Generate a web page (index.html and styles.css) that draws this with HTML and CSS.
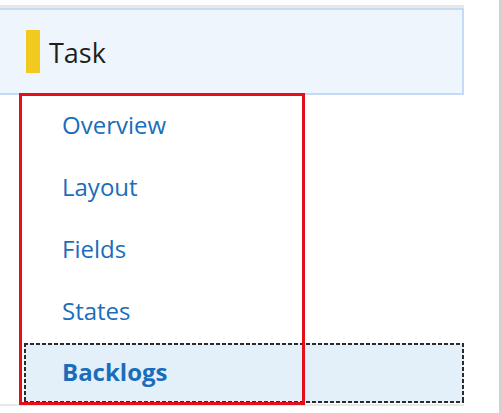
FILE: index.html
```html
<!DOCTYPE html>
<html>
<head>
<meta charset="utf-8">
<link rel="stylesheet" href="styles.css">
</head>
<body>
<div class="page">
  <div class="panel">
    <div class="topline"></div>
    <div class="header">
      <span class="bar"></span>
      <span class="title">Task</span>
    </div>
    <ul class="nav">
      <li class="item"><a>Overview</a></li>
      <li class="item"><a>Layout</a></li>
      <li class="item"><a>Fields</a></li>
      <li class="item"><a>States</a></li>
      <li class="item selected"><a>Backlogs</a></li>
    </ul>
    <div class="bottomline"></div>
    <div class="highlight"></div>
  </div>
  <div class="rightline"></div>
</div>
</body>
</html>
```
FILE: styles.css
```css
html, body {
  margin: 0;
  padding: 0;
  background: #ffffff;
  font-family: "Open Sans", "Noto Sans", sans-serif;
}
.page {
  display: flex;
  width: 502px;
  height: 413px;
  justify-content: space-between;
}
.panel {
  position: relative;
  width: 464px;
  padding-top: 5px;
}
.topline {
  height: 3px;
  background: #e8e8e8;
}
.header {
  height: 83px;
  box-sizing: content-box;
  background: #eff5fd;
  border: 2px solid #c3dbf5;
  border-left: none;
  display: flex;
  align-items: center;
  padding-left: 26px;
  gap: 9px;
}
.bar {
  width: 14px;
  height: 43px;
  background: #f2ca1f;
}
.title {
  font-size: 27px;
  color: #201f1e;
  line-height: 1;
  margin-top: 1px;
}
.nav {
  list-style: none;
  margin: 0;
  padding: 0 0 0 24px;
}
.item {
  height: 62px;
  display: flex;
  align-items: center;
  padding-left: 38px;
  padding-bottom: 2px;
  box-sizing: border-box;
}
.item a {
  font-size: 24px;
  color: #1a6dbb;
  line-height: 1;
}
.item.selected {
  height: 60px;
  padding-left: 38px;
  background-color: #e3f0fa;
  background-image:
    repeating-linear-gradient(90deg, #2b2b2b 0 4px, transparent 4px 6px),
    repeating-linear-gradient(90deg, #2b2b2b 0 4px, transparent 4px 6px),
    repeating-linear-gradient(180deg, #2b2b2b 0 4px, transparent 4px 6px),
    repeating-linear-gradient(180deg, #2b2b2b 0 4px, transparent 4px 6px);
  background-size: 100% 2px, 100% 2px, 2px 100%, 2px 100%;
  background-position: 0 0, 0 100%, 0 0, 100% 0;
  background-repeat: no-repeat;
}
.item.selected a {
  font-weight: 700;
}
.bottomline {
  height: 2px;
  margin-top: 1px;
  background: #e8e8e8;
}
.highlight {
  position: absolute;
  left: 19px;
  top: 93px;
  width: 280px;
  height: 306px;
  border: 3px solid #e3101b;
}
.rightline {
  width: 3px;
  background: #d2d2d2;
}
```
